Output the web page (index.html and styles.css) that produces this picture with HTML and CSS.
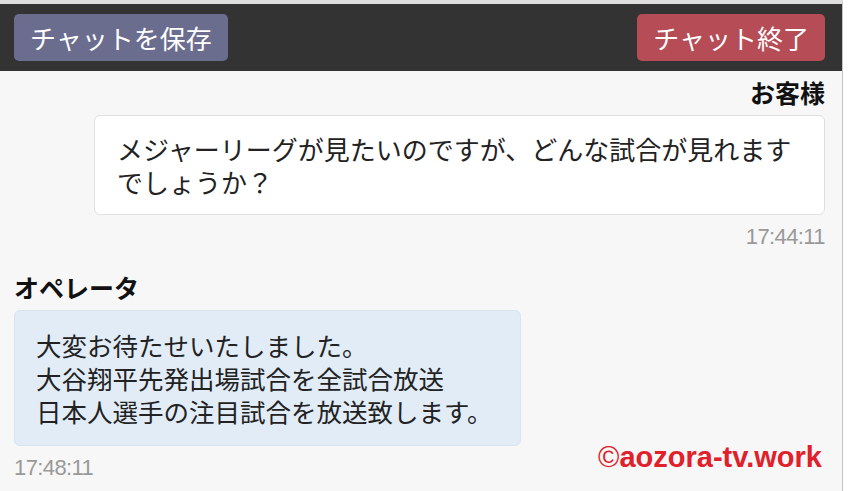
FILE: index.html
```html
<!DOCTYPE html>
<html lang="ja">
<head>
<meta charset="utf-8">
<link rel="stylesheet" href="styles.css">
</head>
<body>
<div class="app">
  <header class="toolbar">
    <button class="btn btn-save">チャットを保存</button>
    <button class="btn btn-end">チャット終了</button>
  </header>
  <main class="chat">
    <section class="msg msg-customer">
      <div class="name">お客様</div>
      <div class="bubble">メジャーリーグが見たいのですが、どんな試合が見れますでしょうか？</div>
      <div class="time">17:44:11</div>
    </section>
    <section class="msg msg-operator">
      <div class="name">オペレータ</div>
      <div class="bubble">大変お待たせいたしました。<br>大谷翔平先発出場試合を全試合放送<br>日本人選手の注目試合を放送致します。</div>
      <div class="time">17:48:11</div>
    </section>
    <div class="watermark"><span class="copy">©</span>aozora-tv.work</div>
  </main>
</div>
</body>
</html>
```
FILE: styles.css
```css
html, body {
  margin: 0;
  padding: 0;
  background: #ffffff;
}
body {
  font-family: "Noto Sans CJK JP", "Liberation Sans", sans-serif;
  width: 848px;
  height: 491px;
  overflow: hidden;
}
.app {
  width: 843px;
  height: 491px;
  border-top: 4px solid #dedede;
  border-right: 1px solid #c4c4c4;
  box-sizing: border-box;
  background: #f7f7f7;
  position: relative;
}
.toolbar {
  background: #333333;
  height: 67px;
  padding: 0 17px 0 14px;
  display: flex;
  align-items: center;
  justify-content: space-between;
  box-sizing: border-box;
}
.btn {
  font-family: "Noto Sans CJK JP", sans-serif;
  font-size: 26px;
  line-height: 47px;
  height: 47px;
  padding: 0 16px;
  border: 0;
  border-radius: 5px;
  color: #ffffff;
  cursor: pointer;
}
.btn-save { background: #6b6d8e; }
.btn-end { background: #b64c56; }
.chat {
  padding: 4px 17px 0 14px;
  display: flex;
  flex-direction: column;
}
.msg {
  display: flex;
  flex-direction: column;
}
.msg-customer { align-items: flex-end; }
.msg-operator { align-items: flex-start; margin-top: 18px; }
.name {
  font-size: 25px;
  font-weight: bold;
  line-height: 34px;
  color: #111;
}
.bubble {
  margin-top: 6px;
  font-size: 26px;
  line-height: 33px;
  color: #222;
  border-radius: 6px;
  box-sizing: border-box;
}
.msg-customer .bubble {
  width: 731px;
  background: #ffffff;
  border: 1px solid #e0e0e0;
  padding: 16px 22px 16px 22px;
}
.msg-operator .bubble {
  width: 507px;
  background: #e1ecf7;
  border: 1px solid #d8e4f0;
  padding: 17px 21px 18px;
  font-size: 25.5px;
}
.time {
  font-family: "Liberation Sans", Arial, sans-serif;
  font-size: 22px;
  letter-spacing: -0.6px;
  line-height: 30px;
  color: #999999;
  margin-top: 7px;
}
.watermark {
  position: absolute;
  right: 20px;
  bottom: 19px;
  font-family: "Liberation Sans", Arial, sans-serif;
  font-weight: bold;
  font-size: 29px;
  line-height: 30px;
  color: #e0202b;
}
.copy {
  font-weight: normal;
}
```
